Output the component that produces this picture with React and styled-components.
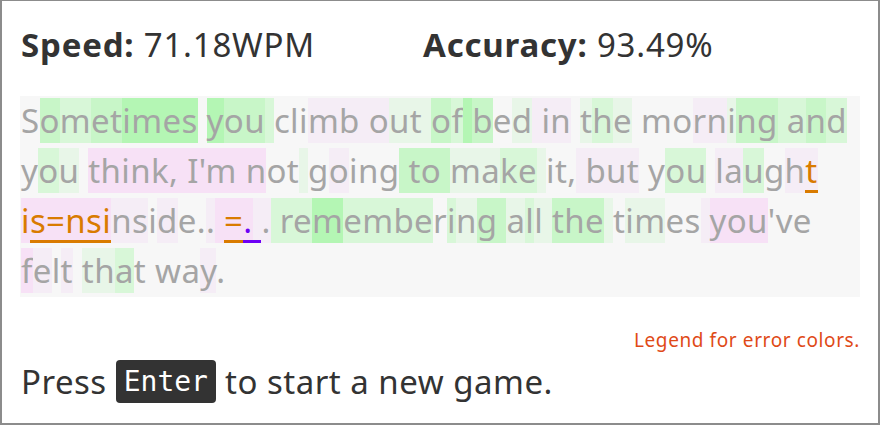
import React from "react";
import styled, { createGlobalStyle } from "styled-components";

const GlobalStyle = createGlobalStyle`
  html, body { margin: 0; padding: 0; background: #ffffff; }
  body { font-family: "Noto Sans", "Open Sans", sans-serif; }
`;

const HL = {
  G: "#b4f6b4",
  g: "#c8f6c8",
  l: "#d8f7d8",
  e: "#e8f6e8",
  P: "#f7e1f6",
  p: "#f5edf6",
  ".": "transparent",
};

const Frame = styled.div`
  box-sizing: border-box;
  width: 880px;
  height: 425px;
  border: 2px solid #8c8c8c;
  border-top-width: 1px;
  padding: 0 18px;
  display: flex;
  flex-direction: column;
`;

const Stats = styled.div`
  display: grid;
  grid-template-columns: 402px auto;
  margin-top: 24px;
  padding-left: 1px;
  font-size: 33px;
  letter-spacing: 0.8px;
  line-height: 40px;
  color: #333333;
`;

const Stat = styled.div`
  white-space: nowrap;
`;

const Label = styled.span`
  font-weight: 700;
`;

const Passage = styled.div`
  margin-top: 31px;
  background: #f7f7f7;
  padding-left: 1px;
  font-size: 33px;
  letter-spacing: 0.37px;
  line-height: 50px;
  color: #a5a5a5;
  height: 201px;
  box-sizing: border-box;
`;

const Ch = styled.span`
  background: ${(p) => p.$bg};
  color: ${(p) => (p.$err === "purple" ? "#6d00f5" : p.$err ? "#d97b00" : "inherit")};
  box-shadow: ${(p) =>
    p.$err === "purple"
      ? "inset 0 -3px 0 #6d00f5"
      : p.$err === "ou"
      ? "inset 0 -3px 0 #d97b00"
      : "none"};
`;

const Legend = styled.div`
  margin-top: 31px;
  text-align: right;
  font-size: 19px;
  letter-spacing: 0.6px;
  line-height: 24px;
  color: #df4a17;
`;

const PressRow = styled.div`
  margin-top: 8px;
  display: flex;
  align-items: center;
  gap: 9px;
  padding-left: 1px;
  font-size: 33px;
  letter-spacing: 0.5px;
  color: #333333;
  height: 43px;
`;

const Key = styled.span`
  display: inline-flex;
  align-items: center;
  height: 43px;
  padding: 0 8px;
  box-sizing: border-box;
  background: #333333;
  color: #ffffff;
  border-radius: 4px;
  font-family: "DejaVu Sans Mono", "Liberation Mono", monospace;
  font-size: 28px;
  letter-spacing: 0;
`;

const tokens = [
  ["Sometimes ", ".glggGGGG."],
  ["you ", "Gggl"],
  ["climb ", "...ppp"],
  ["out ", "peee"],
  ["of ", "glG"],
  ["bed ", "g.ep"],
  ["in ", "pp."],
  ["the ", "ele."],
  ["morning ", "..ppeggl"],
  ["and ", "lgl."],
  ["you ", ".le."],
  ["think, ", "PPPPPPP"],
  ["I'm ", "PPPP"],
  ["not ", "P..e"],
  ["going ", ".p...g"],
  ["to ", "ggg"],
  ["make ", "eelle"],
  ["it, ", "...p"],
  ["but ", "ppp."],
  ["you ", ".ll."],
  ["laugh", "ppl.p"],
  ["t", "p", "ou"],
  [" ", "."],
  ["i", "P", "o"],
  ["s=nsi", "PPPPP", "ou"],
  ["nside..", "pp.p..p"],
  [" ", "P"],
  ["=", "P", "ou"],
  [". ", "Pp", "purple"],
  [". ", "pl"],
  ["remembering ", "llGllll.legg"],
  ["all ", "elee"],
  ["the ", "ggge"],
  ["times ", ".ee..p"],
  ["you've ", "PPP...."],
  ["felt ", "Pp.p."],
  ["that ", "eel.."],
  ["way.", "..p."],
];

export default function App() {
  const chars = [];
  tokens.forEach(([text, codes, err], ti) => {
    for (let i = 0; i < text.length; i++) {
      chars.push(
        <Ch key={`${ti}-${i}`} $bg={HL[codes[i]] || "transparent"} $err={err}>
          {text[i]}
        </Ch>
      );
    }
  });

  return (
    <>
      <GlobalStyle />
      <Frame>
        <Stats>
          <Stat>
            <Label>Speed:</Label> 71.18WPM
          </Stat>
          <Stat>
            <Label>Accuracy:</Label> 93.49%
          </Stat>
        </Stats>
        <Passage>{chars}</Passage>
        <Legend>Legend for error colors.</Legend>
        <PressRow>
          <span>Press</span>
          <Key>Enter</Key>
          <span>to start a new game.</span>
        </PressRow>
      </Frame>
    </>
  );
}
